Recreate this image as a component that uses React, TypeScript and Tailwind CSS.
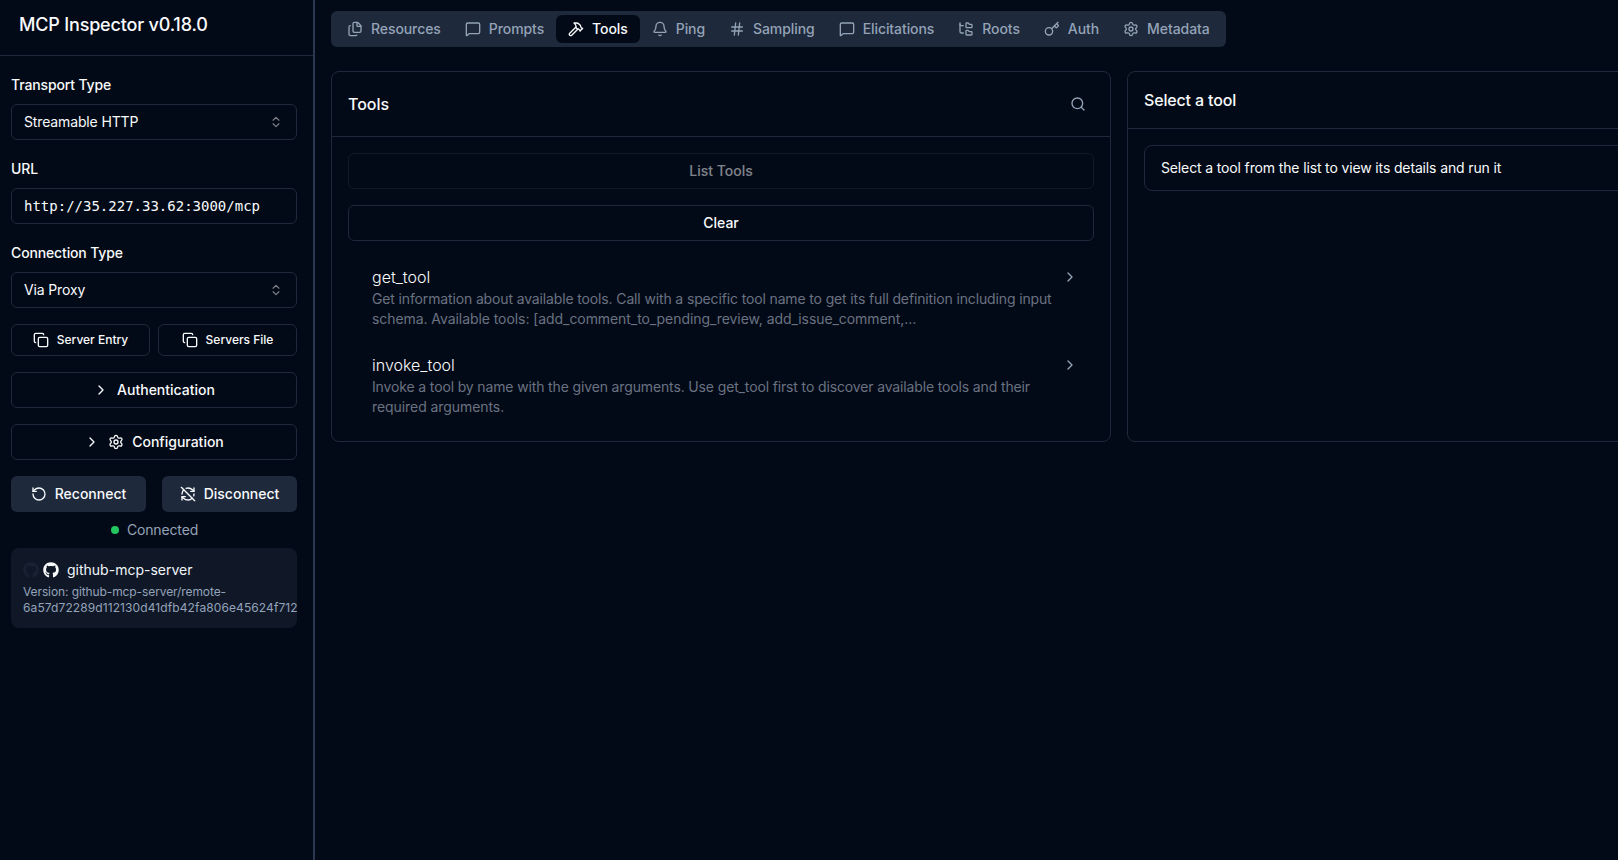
import { ChevronRight, ChevronsUpDown, Copy, Bell, Files, FolderTree, Hammer, Hash, Key, MessageSquare, RefreshCwOff, RotateCcw, Search, Settings } from "lucide-react"
import { FaGithub } from "react-icons/fa"

const tabs = [
  { name: "Resources", icon: Files },
  { name: "Prompts", icon: MessageSquare },
  { name: "Tools", icon: Hammer, active: true },
  { name: "Ping", icon: Bell },
  { name: "Sampling", icon: Hash },
  { name: "Elicitations", icon: MessageSquare },
  { name: "Roots", icon: FolderTree },
  { name: "Auth", icon: Key },
  { name: "Metadata", icon: Settings },
]

const tools = [
  {
    name: "get_tool",
    lines: [
      "Get information about available tools. Call with a specific tool name to get its full definition including input",
      "schema. Available tools: [add_comment_to_pending_review, add_issue_comment,...",
    ],
  },
  {
    name: "invoke_tool",
    lines: [
      "Invoke a tool by name with the given arguments. Use get_tool first to discover available tools and their",
      "required arguments.",
    ],
  },
]

const SelectBox = ({ label }: { label: string }) => (
  <div className="flex h-9 items-center justify-between rounded-md border border-[#1e293b] pl-3 pr-[13px] text-sm tracking-[-0.01em] text-[#f8fafc]">
    <span>{label}</span>
    <ChevronsUpDown className="h-[14px] w-[14px] opacity-50" />
  </div>
)

const Sidebar = () => (
  <aside className="h-screen w-[315px] shrink-0 border-r-2 border-[#2b3950]">
    <div className="h-[56px] border-b border-[#1e293b] pl-[19px] pt-[11px]">
      <h1 className="text-lg font-[550] tracking-[-0.01em] text-[#f8fafc]">MCP Inspector v0.18.0</h1>
    </div>
    <div className="pl-[11px] pr-[16px] pt-[19px]">
      <label className="mb-[9px] block text-sm font-[450] tracking-[-0.01em] text-[#f8fafc]">Transport Type</label>
      <SelectBox label="Streamable HTTP" />
      <label className="mb-[9px] mt-[19px] block text-sm font-[450] tracking-[-0.01em] text-[#f8fafc]">URL</label>
      <div className="flex h-9 items-center rounded-md border border-[#1e293b] px-3 font-['DejaVu_Sans_Mono',monospace] text-sm text-[#f8fafc]">
        http://35.227.33.62:3000/mcp
      </div>
      <label className="mb-[9px] mt-[19px] block text-sm font-[450] tracking-[-0.01em] text-[#f8fafc]">Connection Type</label>
      <SelectBox label="Via Proxy" />
      <div className="mt-4 grid grid-cols-2 gap-2">
        <button className="flex h-8 items-center justify-center gap-2 rounded-md border border-[#1e293b] text-xs font-[450] text-[#f8fafc]">
          <Copy className="h-4 w-4" />
          Server Entry
        </button>
        <button className="flex h-8 items-center justify-center gap-2 rounded-md border border-[#1e293b] text-xs font-[450] text-[#f8fafc]">
          <Copy className="h-4 w-4" />
          Servers File
        </button>
      </div>
      <button className="mt-4 flex h-9 w-full items-center justify-center gap-2 rounded-md border border-[#1e293b] text-sm font-[450] text-[#f8fafc]">
        <ChevronRight className="h-4 w-4" />
        Authentication
      </button>
      <button className="mt-4 flex h-9 w-full items-center justify-center gap-2 rounded-md border border-[#1e293b] text-sm font-[450] text-[#f8fafc]">
        <ChevronRight className="h-4 w-4" />
        <Settings className="h-4 w-4" />
        Configuration
      </button>
      <div className="mt-4 grid grid-cols-2 gap-4">
        <button className="flex h-9 items-center justify-center gap-2 rounded-md bg-[#1e293b] text-sm font-[450] text-[#f8fafc]">
          <RotateCcw className="h-4 w-4" />
          Reconnect
        </button>
        <button className="flex h-9 items-center justify-center gap-2 rounded-md bg-[#1e293b] text-sm font-[450] text-[#f8fafc]">
          <RefreshCwOff className="h-4 w-4" />
          Disconnect
        </button>
      </div>
      <div className="mt-2 flex h-5 items-center justify-center gap-2 pl-px">
        <span className="h-2 w-2 rounded-full bg-[#22c55e]" />
        <span className="text-sm tracking-[-0.01em] text-[#94a3b8]">Connected</span>
      </div>
      <div className="mt-2 h-20 overflow-hidden rounded-lg bg-[#101828] px-3 pt-3">
        <div className="flex h-5 items-center gap-1">
          <FaGithub className="h-4 w-4 text-[#1e293b] opacity-60" />
          <FaGithub className="h-4 w-4 text-[#f8fafc]" />
          <span className="ml-1 text-sm text-[#f1f5f9]">github-mcp-server</span>
        </div>
        <p className="mt-1 whitespace-nowrap text-xs text-[#94a3b8]">
          <span className="tracking-[-0.1px]">Version: github-mcp-server/remote-</span>
          <br />
          <span className="tracking-[0.1px]">6a57d72289d112130d41dfb42fa806e45624f712</span>
        </p>
      </div>
    </div>
  </aside>
)

const ToolsPanel = () => (
  <section className="h-[371px] rounded-lg border border-[#1e293b]">
    <div className="flex h-[65px] items-center justify-between border-b border-[#1e293b] pl-4 pr-[24px]">
      <h3 className="font-[550] text-[#f8fafc]">Tools</h3>
      <Search className="h-4 w-4 text-[#94a3b8]" />
    </div>
    <div className="px-4 pt-4">
      <button className="flex h-9 w-full items-center justify-center rounded-md border border-[#1e293b] text-sm font-[450] text-[#f8fafc] opacity-50">
        List Tools
      </button>
      <button className="mt-4 flex h-9 w-full items-center justify-center rounded-md border border-[#1e293b] text-sm font-[450] text-[#f8fafc]">
        Clear
      </button>
      <div className="mt-3">
        {tools.map((tool) => (
          <div key={tool.name} className="relative py-3 pl-[24px]">
            <div className="font-[350] text-[#f8fafc]">{tool.name}</div>
            <p className="whitespace-nowrap text-sm tracking-[-0.01em] text-gray-500">
              {tool.lines[0]}
              <br />
              <span className="tracking-[-0.07px]">{tool.lines[1]}</span>
            </p>
            <ChevronRight className="absolute right-[16px] top-[16px] h-4 w-4 text-[#94a3b8]" />
          </div>
        ))}
      </div>
    </div>
  </section>
)

const DetailPanel = () => (
  <section className="h-[371px] rounded-lg border border-[#1e293b]">
    <div className="flex h-[57px] items-center border-b border-[#1e293b] px-4">
      <h3 className="font-[550] tracking-[-0.01em] text-[#f8fafc]">Select a tool</h3>
    </div>
    <div className="p-4">
      <div className="rounded-lg border border-[#1e293b] px-4 py-3 text-sm tracking-[-0.01em] text-[#f8fafc]">
        Select a tool from the list to view its details and run it
      </div>
    </div>
  </section>
)

export default function App() {
  return (
    <div className="flex h-screen overflow-hidden bg-[#030a17] font-['Inter',sans-serif]">
      <Sidebar />
      <main className="min-w-0 flex-1 overflow-hidden pl-4 pt-[11px]">
        <nav className="flex h-9 w-fit items-center rounded-md bg-[#1e293b] px-1">
          {tabs.map((tab) => (
            <div
              key={tab.name}
              className={
                tab.active
                  ? "flex h-7 items-center rounded-md bg-[#030a17] px-3 text-sm font-[450] tracking-[-0.08px] text-[#f8fafc]"
                  : "flex h-7 items-center rounded-md px-3 text-sm font-[450] tracking-[-0.08px] text-[#94a3b8]"
              }
            >
              <tab.icon className="mr-2 h-4 w-4" />
              {tab.name}
            </div>
          ))}
        </nav>
        <div className="mt-6 grid w-[1576px] grid-cols-2 gap-4">
          <ToolsPanel />
          <DetailPanel />
        </div>
      </main>
    </div>
  )
}
